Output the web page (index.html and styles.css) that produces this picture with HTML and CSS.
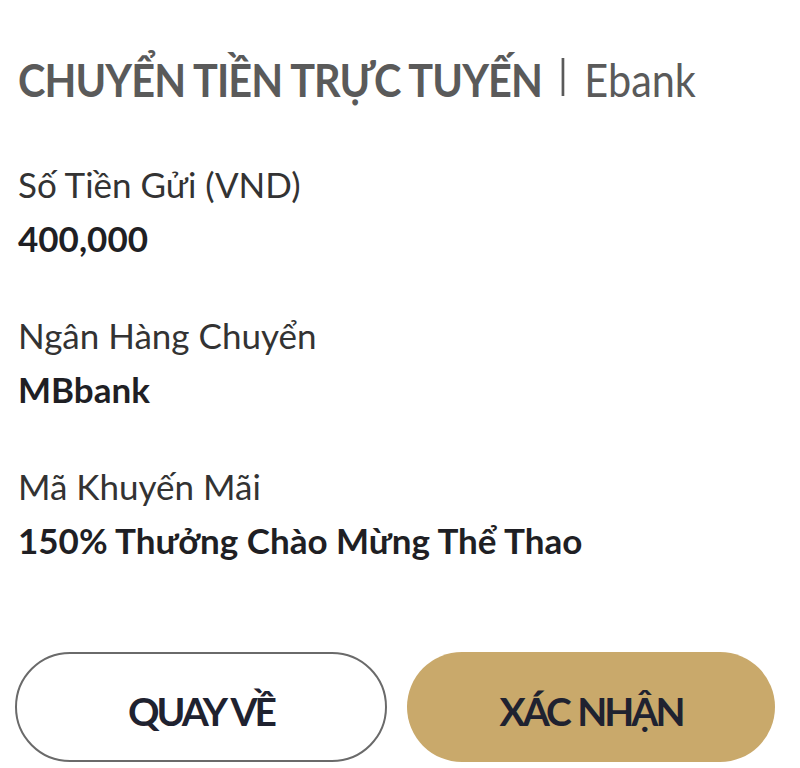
FILE: index.html
```html
<!DOCTYPE html>
<html lang="vi">
<head>
    <meta charset="UTF-8">
    <meta name="viewport" content="width=device-width, initial-scale=1.0">
    <title>Chuyển tiền trực tuyến</title>
    <link rel="stylesheet" href="styles.css">
</head>
<body>
    <div class="container">
        <h1 class="title">CHUYỂN TIỀN TRỰC TUYẾN <span class="sep"></span> <span class="sub">Ebank</span></h1>

        <div class="field">
            <div class="label">Số Tiền Gửi (VND)</div>
            <div class="value">400,000</div>
        </div>
        <div class="field">
            <div class="label">Ngân Hàng Chuyển</div>
            <div class="value">MBbank</div>
        </div>
        <div class="field">
            <div class="label">Mã Khuyến Mãi</div>
            <div class="value">150% Thưởng Chào Mừng Thể Thao</div>
        </div>

        <div class="actions">
            <button class="btn btn-back">QUAY VỀ</button>
            <button class="btn btn-confirm">XÁC NHẬN</button>
        </div>
    </div>
</body>
</html>
```

FILE: styles.css
```css
body {
    margin: 0;
    background-color: #fff;
    font-family: Lato, "Open Sans", sans-serif;
}
.container {
    padding: 52px 18px 0 18px;
}
.title {
    margin: 0 0 50px 0;
    font-size: 46px;
    font-weight: 700;
    color: #5a5a5a;
    letter-spacing: -1px;
    display: flex;
    align-items: center;
    gap: 22px;
    transform: scaleX(0.9);
    transform-origin: left center;
    white-space: nowrap;
}
.sep {
    display: inline-block;
    width: 3px;
    height: 38px;
    background-color: #5a5a5a;
    margin-bottom: 6px;
}
.sub {
    font-weight: 400;
    letter-spacing: 0;
}
.field {
    margin-bottom: 43px;
}
.label {
    font-size: 35px;
    color: #333;
    line-height: 54px;
}
.value {
    font-size: 35px;
    font-weight: 700;
    color: #1f1f24;
    line-height: 54px;
}
.actions {
    display: flex;
    gap: 20px;
    margin: 85px 7px 0 -3px;
}
.btn {
    flex: 1;
    height: 110px;
    padding-top: 8px;
    border-radius: 55px;
    font-family: Lato, sans-serif;
    font-size: 39px;
    font-weight: 700;
    color: #1f2230;
    letter-spacing: -3px;
    word-spacing: 2px;
    cursor: pointer;
}
.btn-back {
    background-color: #fff;
    border: 2px solid #6a6a6a;
}
.btn-confirm {
    background-color: #c9a96b;
    border: none;
}
```
